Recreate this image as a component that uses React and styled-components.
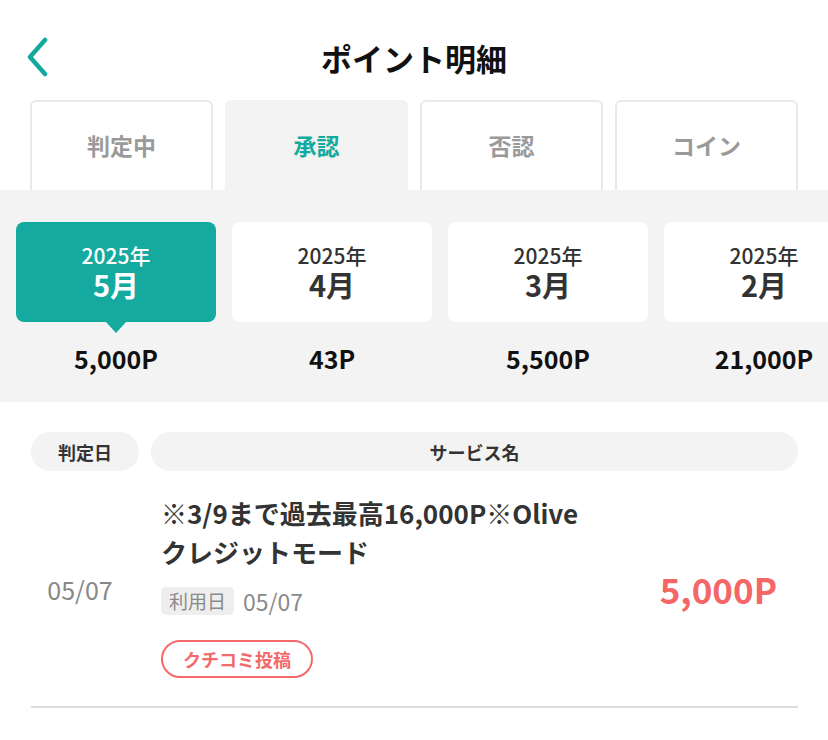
import styled, { createGlobalStyle } from "styled-components";

const GlobalStyle = createGlobalStyle`
  body {
    margin: 0;
    background: #fff;
    font-family: "Noto Sans CJK JP", "Noto Sans", sans-serif;
  }
`;

const months = [
  { year: "2025年", month: "5月", points: "5,000P", active: true },
  { year: "2025年", month: "4月", points: "43P" },
  { year: "2025年", month: "3月", points: "5,500P" },
  { year: "2025年", month: "2月", points: "21,000P" },
];

const tabs = ["判定中", "承認", "否認", "コイン"];

const App = () => {
  return (
    <Page>
      <GlobalStyle />
      <Header>
        <BackButton aria-label="戻る">
          <svg width="24" height="40" viewBox="0 0 24 40">
            <path
              d="M20 3 L5 20 L20 37"
              fill="none"
              stroke="#14a99d"
              strokeWidth="4.5"
              strokeLinecap="round"
              strokeLinejoin="round"
            />
          </svg>
        </BackButton>
        <Title>ポイント明細</Title>
      </Header>

      <Tabs>
        {tabs.map((t) => (
          <Tab key={t} $active={t === "承認"}>
            {t}
          </Tab>
        ))}
      </Tabs>

      <MonthBand>
        {months.map((m) => (
          <MonthCol key={m.month}>
            <MonthCard $active={m.active}>
              <Year>{m.year}</Year>
              <Month>{m.month}</Month>
            </MonthCard>
            <MonthPoints>{m.points}</MonthPoints>
          </MonthCol>
        ))}
      </MonthBand>

      <List>
        <ListHeader>
          <HeaderPill>判定日</HeaderPill>
          <HeaderPill>サービス名</HeaderPill>
        </ListHeader>

        <Row>
          <RowDate>05/07</RowDate>
          <RowBody>
            <RowTitle>※3/9まで過去最高16,000P※Oliveクレジットモード</RowTitle>
            <UseDate>
              <span className="tag">利用日</span>
              <span>05/07</span>
            </UseDate>
            <Chip>クチコミ投稿</Chip>
          </RowBody>
          <RowPoints>5,000P</RowPoints>
        </Row>
      </List>
    </Page>
  );
};

const Page = styled.div`
  width: 828px;
  min-height: 740px;
  background: #fff;
  overflow: hidden;
`;

const Header = styled.div`
  position: relative;
  height: 100px;
  display: flex;
  align-items: center;
  justify-content: center;
  padding-top: 14px;
  box-sizing: border-box;
`;

const BackButton = styled.button`
  position: absolute;
  left: 25px;
  top: 37px;
  border: none;
  background: none;
  padding: 0;
  display: flex;
`;

const Title = styled.h1`
  margin: 0;
  font-size: 31px;
  font-weight: 700;
  color: #111;
`;

const Tabs = styled.div`
  display: flex;
  gap: 12px;
  padding: 0 30px;
  height: 90px;
`;

const Tab = styled.div`
  flex: 1;
  display: flex;
  align-items: center;
  justify-content: center;
  box-sizing: border-box;
  border: 2px solid ${(p) => (p.$active ? "#f3f3f3" : "#e9e9e9")};
  border-bottom: none;
  border-radius: 6px 6px 0 0;
  background: ${(p) => (p.$active ? "#f3f3f3" : "#fff")};
  color: ${(p) => (p.$active ? "#14a99d" : "#9a9a9a")};
  font-size: 23px;
  font-weight: 700;
  padding-bottom: 2px;
`;

const MonthBand = styled.div`
  background: #f3f3f3;
  height: 212px;
  padding: 32px 0 0 16px;
  box-sizing: border-box;
  display: flex;
  gap: 16px;
`;

const MonthCol = styled.div`
  flex: 0 0 200px;
  display: flex;
  flex-direction: column;
  align-items: center;
`;

const MonthCard = styled.div`
  position: relative;
  width: 200px;
  height: 100px;
  border-radius: 8px;
  background: ${(p) => (p.$active ? "#15aaa0" : "#fff")};
  color: ${(p) => (p.$active ? "#fff" : "#333")};
  display: flex;
  flex-direction: column;
  align-items: center;
  justify-content: center;
  padding-bottom: 2px;
  box-sizing: border-box;

  &::after {
    content: "";
    display: ${(p) => (p.$active ? "block" : "none")};
    position: absolute;
    left: 50%;
    bottom: -11px;
    margin-left: -11px;
    border-left: 11px solid transparent;
    border-right: 11px solid transparent;
    border-top: 12px solid #15aaa0;
  }
`;

const Year = styled.div`
  font-size: 21px;
  font-weight: 500;
  line-height: 26px;
  height: 26px;
`;

const Month = styled.div`
  font-size: 29px;
  font-weight: 700;
  line-height: 32px;
  height: 32px;
`;

const MonthPoints = styled.div`
  margin-top: 21px;
  font-size: 25px;
  font-weight: 700;
  color: #111;
  line-height: 30px;
`;

const List = styled.div`
  padding: 30px 30px 0 31px;
`;

const ListHeader = styled.div`
  display: grid;
  grid-template-columns: 108px 1fr;
  gap: 12px;
`;

const HeaderPill = styled.div`
  height: 39px;
  border-radius: 20px;
  background: #f3f3f3;
  display: flex;
  align-items: center;
  justify-content: center;
  font-size: 18px;
  font-weight: 700;
  color: #333;
`;

const Row = styled.div`
  display: grid;
  grid-template-columns: 108px 1fr auto;
  column-gap: 22px;
  align-items: center;
  padding: 22px 21px 28px 0;
  border-bottom: 2px solid #dddddd;
`;

const RowDate = styled.div`
  text-align: center;
  font-size: 25px;
  color: #888;
  padding: 6px 10px 0 0;
`;

const RowBody = styled.div`
  display: flex;
  flex-direction: column;
  align-items: flex-start;
`;

const RowTitle = styled.div`
  width: 440px;
  font-size: 26px;
  font-weight: 700;
  color: #333;
  line-height: 39px;
`;

const UseDate = styled.div`
  display: flex;
  align-items: center;
  gap: 9px;
  margin-top: 13px;
  font-size: 23px;
  color: #8a8a8a;

  .tag {
    background: #eeeeee;
    border-radius: 5px;
    font-size: 19px;
    padding: 0 8px;
    height: 28px;
    line-height: 28px;
    color: #8a8a8a;
  }
`;

const Chip = styled.div`
  margin-top: 22px;
  border: 2px solid #f26a6a;
  border-radius: 20px;
  height: 38px;
  box-sizing: border-box;
  padding: 0 20px;
  display: flex;
  align-items: center;
  font-size: 18px;
  font-weight: 700;
  color: #f26a6a;
`;

const RowPoints = styled.div`
  font-size: 35px;
  font-weight: 700;
  color: #f56666;
  padding-top: 6px;
`;

export default App;
